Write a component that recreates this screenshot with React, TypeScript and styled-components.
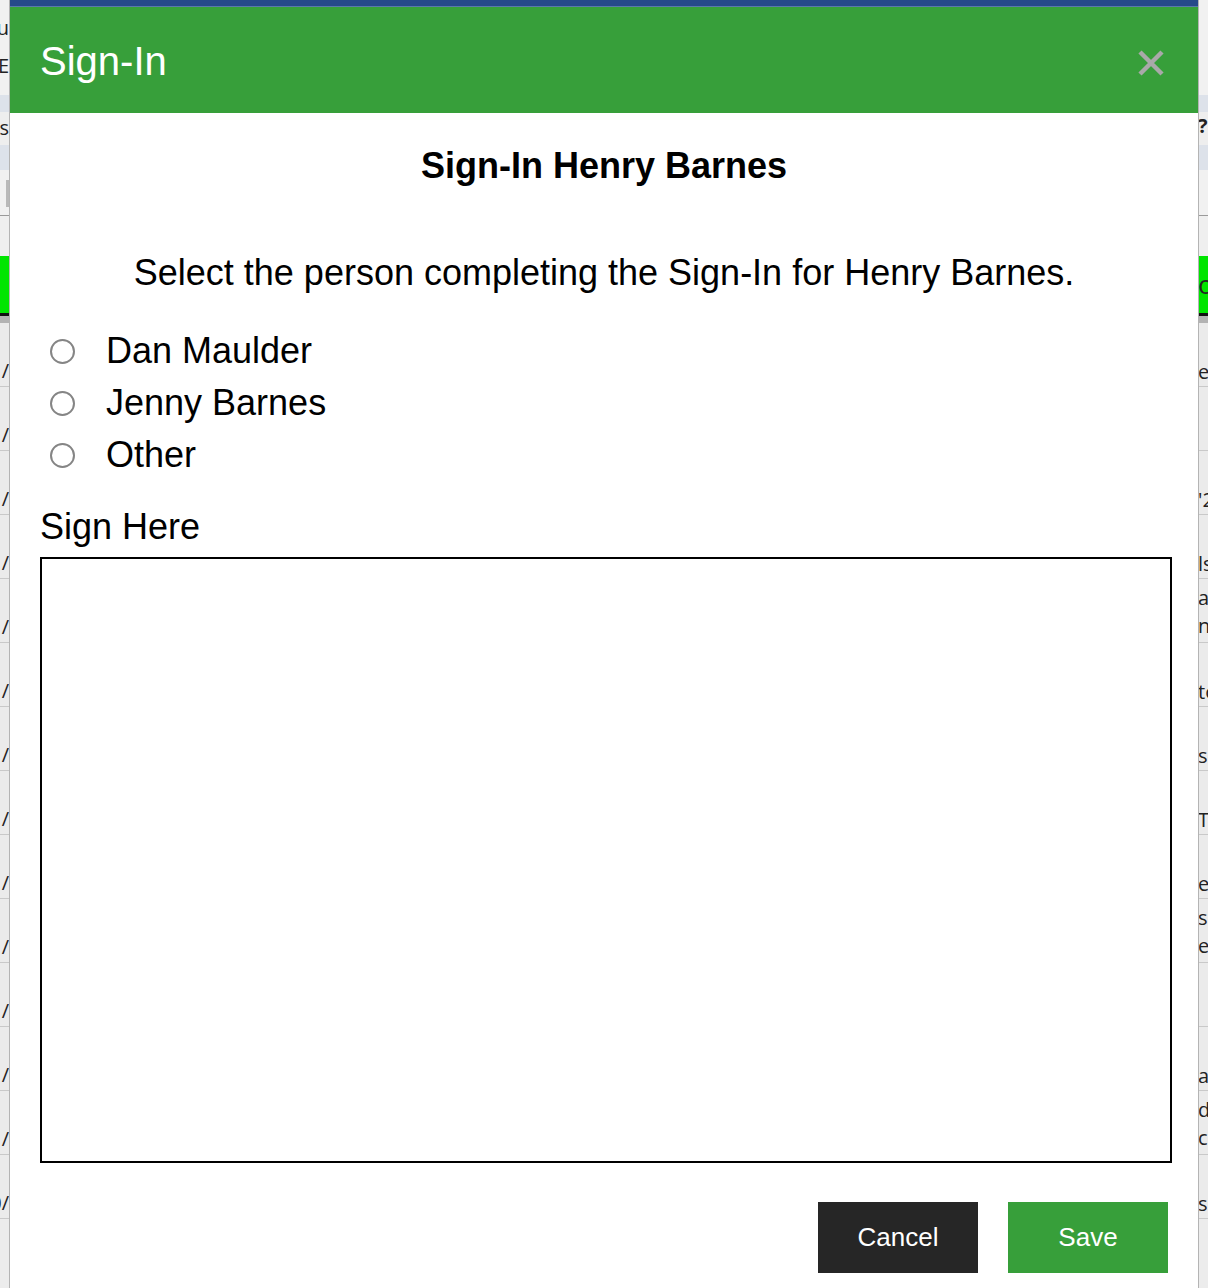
import React from "react";
import styled, { createGlobalStyle } from "styled-components";

const Global = createGlobalStyle`
  html, body { margin: 0; padding: 0; height: 100%; overflow: hidden; }
  body { font-family: "Liberation Sans", Arial, sans-serif; background: #ececec; }
  #root { height: 100%; }
`;

/* ---------- background page (mostly hidden under the dialog) ---------- */

const Page = styled.div`
  width: 1208px;
  height: 1288px;
  overflow: hidden;
  font-family: "Open Sans", "Liberation Sans", sans-serif;
  font-size: 20px;
  color: #222;
`;

const BgRow = styled.div<{ $h: number; $bg: string; $line?: string }>`
  display: grid;
  grid-template-columns: 9px 1fr 10px;
  height: ${(p) => p.$h}px;
  background: ${(p) => p.$bg};
  border-bottom: ${(p) => p.$line || "none"};
  box-sizing: border-box;
`;

const LeftCell = styled.div<{ $top?: number }>`
  display: flex;
  justify-content: flex-end;
  align-items: flex-start;
  padding-top: ${(p) => p.$top ?? 10}px;
  white-space: nowrap;
  overflow: visible;
  min-width: 0;
  line-height: 28px;
`;

const RightCell = styled.div<{ $top?: number; $bold?: boolean; $size?: number }>`
  display: flex;
  flex-direction: column;
  justify-content: flex-start;
  padding-top: ${(p) => p.$top ?? 10}px;
  white-space: nowrap;
  overflow: hidden;
  line-height: 28px;
  font-weight: ${(p) => (p.$bold ? 700 : 400)};
  font-size: ${(p) => p.$size ?? 20}px;
`;

const Thumb = styled.div`
  width: 3px;
  height: 27px;
  margin-top: 10px;
  background: #b9b9b9;
`;

/* ---------- dialog ---------- */

const Overlay = styled.div`
  position: fixed;
  top: 0;
  left: 9px;
  width: 1190px;
  bottom: -200px;
  background: #ffffff;
  border-left: 1px solid #b4b4b4;
  border-right: 1px solid #b4b4b4;
  box-sizing: border-box;
  display: flex;
  flex-direction: column;
  font-family: "Liberation Sans", Arial, sans-serif;
  color: #000;
`;

const TopStripe = styled.div`
  height: 6px;
  background: #264989;
  border-bottom: 1px solid #5b78aa;
`;

const Header = styled.div`
  display: flex;
  align-items: flex-start;
  justify-content: space-between;
  background: #379f3a;
  height: 106px;
  box-sizing: border-box;
  padding: 32px 34px 0 30px;
`;

const HeaderTitle = styled.h1`
  margin: 0;
  font-size: 40px;
  font-weight: 400;
  line-height: normal;
  color: #ffffff;
`;

const CloseButton = styled.button`
  border: 0;
  background: transparent;
  padding: 0;
  margin-top: 11px;
  width: 26px;
  height: 26px;
  cursor: pointer;
  display: block;
`;

const Body = styled.div`
  padding: 32px 26px 0 30px;
  display: flex;
  flex-direction: column;
`;

const Title = styled.h2`
  margin: 0 0 0 -4px;
  text-align: center;
  font-size: 36px;
  font-weight: 700;
  line-height: normal;
`;

const Instruction = styled.p`
  margin: 65px 0 0 -4px;
  text-align: center;
  font-size: 36px;
  line-height: normal;
`;

const RadioList = styled.div`
  margin-top: 31px;
  display: flex;
  flex-direction: column;
`;

const RadioRow = styled.label`
  display: flex;
  align-items: center;
  height: 52px;
  font-size: 36px;
  line-height: 52px;
  cursor: pointer;
`;

const Radio = styled.input`
  appearance: none;
  -webkit-appearance: none;
  width: 25px;
  height: 25px;
  margin: 0 31px 0 10px;
  border: 2px solid #858585;
  border-radius: 50%;
  background: #fff;
  box-sizing: border-box;
  flex: none;
  &:checked {
    background: radial-gradient(circle, #1a1a1a 0 5px, #fff 6px);
  }
`;

const SignLabel = styled.div`
  margin-top: 25px;
  font-size: 36px;
  line-height: normal;
`;

const SignBox = styled.div`
  margin-top: 9px;
  height: 606px;
  border: 2px solid #000;
  box-sizing: border-box;
  background: #fff;
`;

const Actions = styled.div`
  margin: 39px 4px 0 0;
  display: flex;
  justify-content: flex-end;
  gap: 30px;
`;

const ActionButton = styled.button<{ $variant: "dark" | "green" }>`
  width: 160px;
  height: 71px;
  border: 0;
  border-radius: 0;
  color: #fff;
  font-family: "Liberation Sans", Arial, sans-serif;
  font-size: 26px;
  background: ${(p) => (p.$variant === "dark" ? "#262626" : "#379f3a")};
  cursor: pointer;
`;

const rows: { left: string; right: string[] }[] = [
  { left: "1/", right: ["e"] },
  { left: "1/", right: [""] },
  { left: "1/", right: ["'2"] },
  { left: "1/", right: ["ls"] },
  { left: "1/", right: ["a", "ns"] },
  { left: "1/", right: ["to"] },
  { left: "1/", right: ["se"] },
  { left: "1/", right: ["Te"] },
  { left: "1/", right: ["ey"] },
  { left: "1/", right: ["s", "e,"] },
  { left: "1/", right: [""] },
  { left: "1/", right: [" a"] },
  { left: "1/", right: ["d", "cu"] },
  { left: "0/", right: ["ss"] },
];

export default function App() {
  const people = ["Dan Maulder", "Jenny Barnes", "Other"];
  return (
    <>
      <Global />
      <Page>
        <BgRow $h={48} $bg="#f1f1f1">
          <LeftCell $top={14}>Menu</LeftCell>
          <div />
          <RightCell />
        </BgRow>
        <BgRow $h={47} $bg="#f1f1f1">
          <LeftCell $top={4}>HOME</LeftCell>
          <div />
          <RightCell />
        </BgRow>
        <BgRow $h={17} $bg="#dde2ea">
          <LeftCell />
          <div />
          <RightCell />
        </BgRow>
        <BgRow $h={33} $bg="#eeeeee">
          <LeftCell $top={2}>Notes</LeftCell>
          <div />
          <RightCell $top={0} $bold>?.</RightCell>
        </BgRow>
        <BgRow $h={25} $bg="#dde2ea">
          <LeftCell />
          <div />
          <RightCell />
        </BgRow>
        <BgRow $h={46} $bg="#f1f1f1" $line="1px solid #9a9a9a">
          <LeftCell $top={0}>
            <Thumb />
          </LeftCell>
          <div />
          <RightCell />
        </BgRow>
        <BgRow $h={40} $bg="#efefef">
          <LeftCell />
          <div />
          <RightCell />
        </BgRow>
        <BgRow $h={60} $bg="#00e500" $line="3px solid #111">
          <LeftCell />
          <div />
          <RightCell $top={14} $size={26}>
            ot
          </RightCell>
        </BgRow>
        <BgRow $h={7} $bg="#b3b3b3">
          <LeftCell />
          <div />
          <RightCell />
        </BgRow>
        {rows.map((r, i) => (
          <BgRow key={i} $h={64} $bg="#ebebeb" $line="1px solid #c9c9c9">
            <LeftCell $top={34}>{r.left}</LeftCell>
            <div />
            <RightCell $top={r.right.length > 1 ? 5 : 35}>
              {r.right.map((t, j) => (
                <span key={j}>{t}</span>
              ))}
            </RightCell>
          </BgRow>
        ))}
      </Page>

      <Overlay role="dialog" aria-label="Sign-In">
        <TopStripe />
        <Header>
          <HeaderTitle>Sign-In</HeaderTitle>
          <CloseButton aria-label="Close">
            <svg width="26" height="26" viewBox="0 0 26 26">
              <path
                d="M2 2 L24 24 M24 2 L2 24"
                stroke="#a9a9a9"
                strokeWidth="4.5"
                fill="none"
              />
            </svg>
          </CloseButton>
        </Header>
        <Body>
          <Title>Sign-In Henry Barnes</Title>
          <Instruction>
            Select the person completing the Sign-In for Henry Barnes.
          </Instruction>
          <RadioList>
            {people.map((p) => (
              <RadioRow key={p}>
                <Radio type="radio" name="signer" value={p} />
                {p}
              </RadioRow>
            ))}
          </RadioList>
          <SignLabel>Sign Here</SignLabel>
          <SignBox />
          <Actions>
            <ActionButton $variant="dark">Cancel</ActionButton>
            <ActionButton $variant="green">Save</ActionButton>
          </Actions>
        </Body>
      </Overlay>
    </>
  );
}
